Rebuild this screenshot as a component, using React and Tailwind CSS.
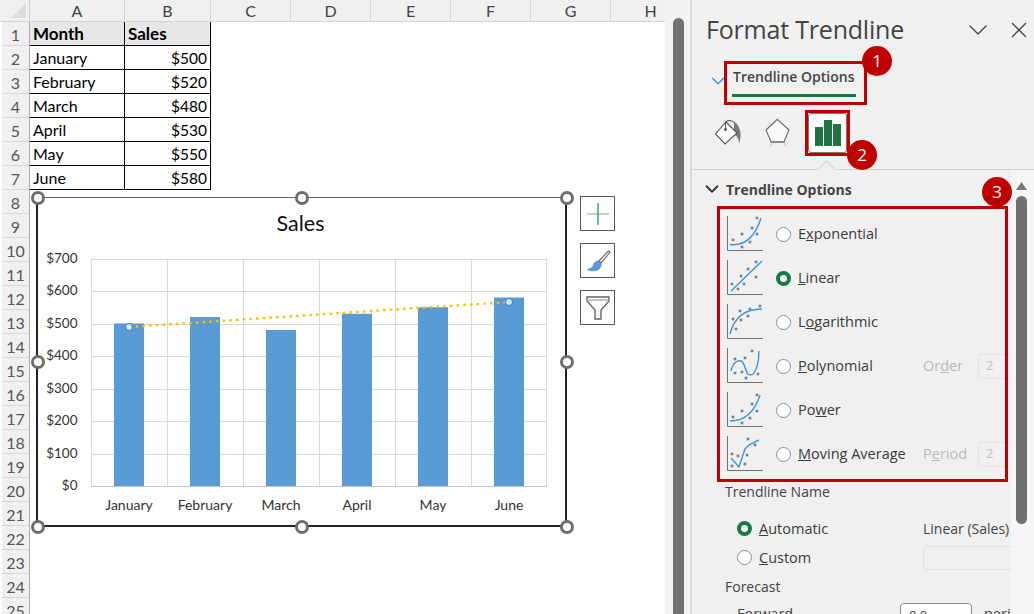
import { ChevronDown, X } from "lucide-react";

const columns = [
  { name: "A", width: 95 },
  { name: "B", width: 86 },
  { name: "C", width: 80 },
  { name: "D", width: 80 },
  { name: "E", width: 80 },
  { name: "F", width: 80 },
  { name: "G", width: 80 },
  { name: "H", width: 80 },
];

const sales = [
  ["January", 500],
  ["February", 520],
  ["March", 480],
  ["April", 530],
  ["May", 550],
  ["June", 580],
];

const rowNumbers = Array.from({ length: 25 }, (_, i) => i + 1);

const trendIcons = {
  exponential: {
    dots: [[6, 24], [15, 18], [15, 31], [23, 26], [25, 12], [30, 18], [30, 2]],
    line: "M3 28.5C15 30 27 24 34 2",
  },
  linear: {
    dots: [[5, 24], [11, 29], [14, 16], [17, 24], [21, 9], [29, 17], [29, 2]],
    line: "M4 31L35 1",
  },
  logarithmic: {
    dots: [[6, 15], [9, 25], [13, 7], [14, 16], [21, 12], [23, 5], [33, 2]],
    line: "M3 30C7 14 17 5 35 5",
  },
  polynomial: {
    dots: [[8, 11], [18, 10], [25, 3], [8, 25], [15, 24], [19, 30], [31, 26]],
    line: "M4 23C6 14 11 12 14 13C19 15 18 27 23 27C29 27 32 14 32 3",
  },
  power: {
    dots: [[6, 25], [15, 19], [15, 31], [23, 26], [25, 12], [30, 19], [30, 3]],
    line: "M3 29C17 29 27 22 33 3",
  },
  moving: {
    dots: [[5, 18], [5, 30], [11, 20], [18, 28], [20, 19], [21, 3], [28, 9]],
    line: "M4 22L12 31L18 13L22 9L32 4",
  },
};

function TrendIcon({ kind }) {
  const icon = trendIcons[kind];
  return (
    <svg width="36" height="36" viewBox="0 0 36 36" className="shrink-0">
      <path d="M0.5 0V34.5H36" fill="none" stroke="#707070" />
      {icon.dots.map(([x, y]) => (
        <rect key={`${x}-${y}`} x={x - 1.3} y={y - 1.3} width="2.6" height="2.6" fill="#7f7f7f" />
      ))}
      <path d={icon.line} fill="none" stroke="#3a96dd" strokeWidth="1.4" />
    </svg>
  );
}

function Radio({ checked }) {
  return checked ? (
    <span className="block w-[15px] h-[15px] shrink-0 rounded-full bg-white border-[4px] border-[#107c41]" />
  ) : (
    <span className="block w-[15px] h-[15px] shrink-0 rounded-full bg-white border border-[#8a8a8a]" />
  );
}

function SmallInput({ value }) {
  return (
    <div className="ml-auto w-[40px] h-[25px] shrink-0 -mr-[7px] rounded-[4px] border border-[#e2e2e2] pl-[7px] text-[13px] leading-[20px] text-[#c4c4c4]">
      {value}
    </div>
  );
}

function TrendOption({ kind, checked, children, extra }) {
  return (
    <div className="flex items-center h-[44px] pl-[35px]">
      <TrendIcon kind={kind} />
      <div className="ml-[13px]">
        <Radio checked={checked} />
      </div>
      <span className="ml-[7px] w-[125px] shrink-0 whitespace-nowrap text-[14.5px] text-[#3b3b3b]">{children}</span>
      {extra}
    </div>
  );
}

function Handle({ className }) {
  return (
    <span className={`absolute w-[14px] h-[14px] rounded-full bg-white border-[3px] border-[#6e6e6e] ${className}`} />
  );
}

function Badge({ className, children }) {
  return (
    <span
      className={`absolute flex items-center justify-center w-[30px] h-[30px] rounded-full bg-[#c00000] text-white text-[17px] ${className}`}
    >
      {children}
    </span>
  );
}

function ChartTool({ children }) {
  return (
    <div className="flex items-center justify-center w-[35px] h-[35px] bg-white border border-[#555]">
      {children}
    </div>
  );
}

function SalesChart() {
  const baseY = 486;
  const perDollar = 227.5 / 700;
  return (
    <svg viewBox="38 197 529 331" className="w-full h-full">
      {[0, 100, 200, 300, 400, 500, 600, 700].map((v) => {
        const y = Math.round(baseY - v * perDollar) + 0.5;
        return (
          <g key={v}>
            <line x1="91.5" x2="547" y1={y} y2={y} stroke={v === 0 ? "#c4c4c4" : "#d9d9d9"} />
            <text x="77.5" y={y + 3} textAnchor="end" fontSize="13.5" fill="#333">
              ${v}
            </text>
          </g>
        );
      })}
      {[91.5, 167.5, 243.5, 319.5, 395.5, 471.5, 546.5].map((x) => (
        <line key={x} x1={x} x2={x} y1="258.5" y2="486" stroke="#d9d9d9" />
      ))}
      {sales.map(([month, v], i) => (
        <g key={month}>
          <rect x={114 + i * 76} y={baseY - v * perDollar} width="30" height={v * perDollar} fill="#5b9bd5" />
          <text x={129 + i * 76} y="510" textAnchor="middle" fontSize="14" fill="#333">
            {month}
          </text>
        </g>
      ))}
      <line x1="129" y1="327" x2="509" y2="302" stroke="#ffc000" strokeWidth="2.5" strokeDasharray="2.5 4.2" />
      <circle cx="129" cy="327" r="3.5" fill="#d4e8f5" stroke="#3f88c5" strokeWidth="1.2" />
      <circle cx="509" cy="302" r="3.5" fill="#d4e8f5" stroke="#3f88c5" strokeWidth="1.2" />
      <text x="300.5" y="231" textAnchor="middle" fontSize="21.5" fill="#111">
        Sales
      </text>
    </svg>
  );
}

function Sheet() {
  return (
    <div className="relative w-[665px] h-[614px] shrink-0 overflow-hidden bg-white font-['Lato',sans-serif]">
      <div className="flex h-[22px] bg-[#f0f0f0] border-b border-[#d4d4d4]">
        <div className="relative w-[30px] shrink-0 border-r border-[#d4d4d4]">
          <span className="absolute right-[3px] bottom-[3px] w-0 h-0 border-l-[15px] border-t-[15px] border-l-transparent border-t-transparent border-b-0 border-r-[15px] border-r-[#dcdcdc]" />
        </div>
        {columns.map((col) => (
          <div
            key={col.name}
            style={{ width: col.width }}
            className="flex items-center justify-center shrink-0 border-r border-[#d4d4d4] text-[16px] text-[#444]"
          >
            {col.name}
          </div>
        ))}
      </div>
      <div className="flex">
        <div className="w-[30px] shrink-0 pl-[2px] border-r border-[#ababab] bg-white">
          {rowNumbers.map((n) => (
            <div
              key={n}
              className="flex items-center justify-center h-[24px] pt-[2px] bg-[#f0f0f0] border-b border-[#d8d8d8] text-[16px] text-[#555]"
            >
              {n}
            </div>
          ))}
        </div>
        <div className="w-[181px] self-start">
          <div className="flex h-[24px] bg-[#e7e7e7] border-b border-black text-[17px] font-bold text-black">
            <div className="w-[95px] pl-[3px] border-r border-black leading-[24px]">Month</div>
            <div className="flex-1 pl-[3px] border-r border-black leading-[24px]">Sales</div>
          </div>
          {sales.map(([month, v]) => (
            <div key={month} className="flex h-[24px] border-b border-black text-black">
              <div className="w-[95px] pl-[3px] border-r border-black text-[16px] leading-[24px]">{month}</div>
              <div className="flex-1 pr-[3px] text-right border-r border-black text-[15.5px] leading-[25px]">${v}</div>
            </div>
          ))}
        </div>
      </div>

      {/* chart lies on top of the cells */}
      <div className="absolute left-[36px] top-[197px] w-[531px] h-[330px] bg-white border-2 border-[#222] border-t-[1px] border-t-[#666]">
        <div className="absolute left-0 -top-[1px] w-[529px] h-[331px]">
          <SalesChart />
        </div>
        <Handle className="-left-[7px] -top-[7px]" />
        <Handle className="left-[257px] -top-[7px]" />
        <Handle className="-right-[9px] -top-[7px]" />
        <Handle className="-left-[7px] top-[157px]" />
        <Handle className="-right-[9px] top-[157px]" />
        <Handle className="-left-[7px] -bottom-[9px]" />
        <Handle className="left-[257px] -bottom-[9px]" />
        <Handle className="-right-[9px] -bottom-[9px]" />
      </div>

      <div className="absolute left-[580px] top-[196px] flex flex-col gap-[12px]">
        <ChartTool>
          <svg width="24" height="24" viewBox="0 0 24 24">
            <path d="M1 12H23" stroke="#9cc9ac" strokeWidth="1.4" />
            <path d="M12 1V23" stroke="#2f9e5f" strokeWidth="1.4" />
          </svg>
        </ChartTool>
        <ChartTool>
          <svg width="26" height="26" viewBox="0 0 26 26">
            <path d="M14 13L23 3.5C24 2.5 25.5 4 24.5 5L16 15Z" fill="#fff" stroke="#666" strokeWidth="1.1" />
            <path d="M14 13C10 13 9 15 8 18C7 20 5 21 2 21.5C6 23.5 13 23.5 15 20C16.5 18 16.5 15 15.5 14Z" fill="#5b9bd5" stroke="#4a86bd" strokeWidth="0.6" />
          </svg>
        </ChartTool>
        <ChartTool>
          <svg width="26" height="26" viewBox="0 0 26 26">
            <path d="M2 2H24V6L16 15V24H10V15L2 6Z" fill="#fff" stroke="#666" strokeWidth="1.4" />
            <path d="M2 5H24" stroke="#aaa" strokeWidth="1.4" />
          </svg>
        </ChartTool>
      </div>
    </div>
  );
}

function PanelTabs() {
  return (
    <div className="relative flex items-start h-[65px] pl-[23px] pt-[8px] border-b border-[#d2d2d2]">
      <svg width="28" height="36" viewBox="0 0 28 36" className="shrink-0">
        <path d="M19 9C24 11 28 20 24 31C24 27 23 24 19 21Z" fill="#7a7a7a" />
        <path d="M11 9L22 20L10 31L0.5 21Z" fill="#fff" stroke="#555" strokeWidth="1.1" />
        <path d="M10.5 16V10C11 7 17 6.5 20 10" fill="none" stroke="#555" strokeWidth="1.1" />
        <circle cx="10.5" cy="16.5" r="1.5" fill="#555" />
      </svg>
      <svg width="28" height="36" viewBox="0 0 28 36" className="ml-[22px] shrink-0">
        <path d="M5 34L7 29H19L21 34" fill="none" stroke="#c4c4c4" strokeWidth="1.2" />
        <path d="M12.3 6.3L24 17L19 28.7H6L1 17Z" fill="#fafafa" stroke="#666" strokeWidth="1.1" />
        <path d="M6 29H19" stroke="#888" strokeWidth="2" />
      </svg>
      <div className="ml-[15px] flex items-center justify-center w-[39px] h-[40px] bg-white rounded-[3px] border border-[#777]">
        <svg width="26" height="26" viewBox="0 0 26 26">
          <path d="M0 7H8V26H0ZM9 0H17V26H9ZM18 4H26V26H18Z" fill="#217346" />
        </svg>
      </div>
      <span className="absolute left-[127.5px] -bottom-[7px] w-[13px] h-[13px] rotate-45 bg-[#f0f0f0] border-l border-t border-[#d2d2d2]" />
    </div>
  );
}

function Panel() {
  return (
    <div className="relative flex-1 h-[614px] overflow-hidden bg-[#f0f0f0] border-l-2 border-[#dadada] font-['Open_Sans',sans-serif]">
      <div className="flex items-center h-[60px] pl-[14px]">
        <h1 className="text-[25px] text-[#444] tracking-[-0.2px] whitespace-nowrap">Format Trendline</h1>
        <ChevronDown className="ml-auto w-[32px] h-[32px] text-[#444]" strokeWidth={1} />
        <X className="ml-[12px] mr-[2px] w-[26px] h-[26px] text-[#444]" strokeWidth={1.2} />
      </div>

      <div className="flex h-[45px] pl-[15px]">
        <ChevronDown className="mt-[10px] w-[22px] h-[22px] text-[#3a96dd]" strokeWidth={1.5} />
        <div className="ml-[3px] w-[124px] h-[37px] pl-[1px] border-b-[3px] border-[#217346] text-[14px] font-semibold text-[#444] leading-[34px] whitespace-nowrap">
          Trendline Options
        </div>
      </div>

      <PanelTabs />

      <div className="flex">
        <div className="w-[319px] shrink-0 overflow-hidden">
          <div className="flex items-center h-[38px] pl-[9px] text-[14px] font-bold text-[#444]">
            <ChevronDown className="w-[22px] h-[22px] text-[#333]" strokeWidth={2} />
            <span className="ml-[3px]">Trendline Options</span>
          </div>
          <div className="h-[4px]" />
          <TrendOption kind="exponential">
            E<u>x</u>ponential
          </TrendOption>
          <TrendOption kind="linear" checked>
            <u>L</u>inear
          </TrendOption>
          <TrendOption kind="logarithmic">
            L<u>o</u>garithmic
          </TrendOption>
          <TrendOption
            kind="polynomial"
            extra={
              <div className="flex flex-1 items-center text-[14.5px] text-[#b9b9b9]">
                Or<u>d</u>er
                <SmallInput value="2" />
              </div>
            }
          >
            <u>P</u>olynomial
          </TrendOption>
          <TrendOption kind="power">
            Po<u>w</u>er
          </TrendOption>
          <TrendOption
            kind="moving"
            extra={
              <div className="flex flex-1 items-center text-[14.5px] text-[#b9b9b9]">
                P<u>e</u>riod
                <SmallInput value="2" />
              </div>
            }
          >
            <u>M</u>oving Average
          </TrendOption>

          <div className="mt-[5px] pl-[33px] h-[22px] text-[14px] leading-[22px] text-[#444]">Trendline Name</div>
          <div className="flex items-center h-[29px] mt-[11px] pl-[45px]">
            <Radio checked />
            <span className="ml-[7px] w-[164px] shrink-0 text-[14.5px] text-[#3b3b3b]">
              <u>A</u>utomatic
            </span>
            <span className="text-[14px] text-[#444] whitespace-nowrap">Linear (Sales)</span>
          </div>
          <div className="flex items-center h-[29px] pl-[45px]">
            <Radio />
            <span className="ml-[7px] w-[164px] shrink-0 text-[14.5px] text-[#3b3b3b]">
              <u>C</u>ustom
            </span>
            <div className="w-[100px] h-[24px] shrink-0 rounded-[4px] border border-[#e0e0e0]" />
          </div>
          <div className="pl-[33px] h-[29px] text-[14px] leading-[29px] text-[#444]">Forecast</div>
          <div className="flex items-start pl-[45px] mt-[2px] text-[14.5px] text-[#444]">
            <span className="w-[163px] shrink-0">
              <u>F</u>orward
            </span>
            <div className="w-[72px] h-[24px] shrink-0 pl-[8px] rounded-[4px] border border-[#8a8a8a] bg-white text-[13px] leading-[22px]">
              0.0
            </div>
            <span className="ml-[12px]">peri</span>
          </div>
        </div>

        <div className="relative flex-1 bg-[#f6f6f6] h-[446px]">
          <svg width="11" height="8" viewBox="0 0 11 8" className="absolute left-[5px] top-[12px]">
            <path d="M5.5 0L11 8H0Z" fill="#777" />
          </svg>
          <div className="absolute left-[5px] top-[26px] w-[11px] h-[328px] rounded-full bg-[#717171]" />
        </div>
      </div>

      {/* annotations from the tutorial, on top of the pane */}
      <div className="absolute left-[32px] top-[61px] w-[143px] h-[44px] border-[3px] border-[#c00000]" />
      <div className="absolute left-[113px] top-[110px] w-[45px] h-[46px] border-[3px] border-[#c00000]" />
      <div className="absolute left-[25px] top-[206px] w-[291px] h-[276px] border-[3px] border-[#c00000]" />
      <Badge className="left-[170px] top-[46px]">1</Badge>
      <Badge className="left-[155px] top-[140px]">2</Badge>
      <Badge className="left-[290px] top-[177px]">3</Badge>
    </div>
  );
}

export default function App() {
  return (
    <div className="flex w-[1034px] h-[614px] overflow-hidden bg-white">
      <Sheet />
      <div className="relative w-[25px] h-[614px] shrink-0 bg-[#f3f3f3]">
        <div className="absolute left-[8px] top-[18px] w-[11px] h-[596px] rounded-t-full bg-[#717171]" />
      </div>
      <Panel />
    </div>
  );
}
